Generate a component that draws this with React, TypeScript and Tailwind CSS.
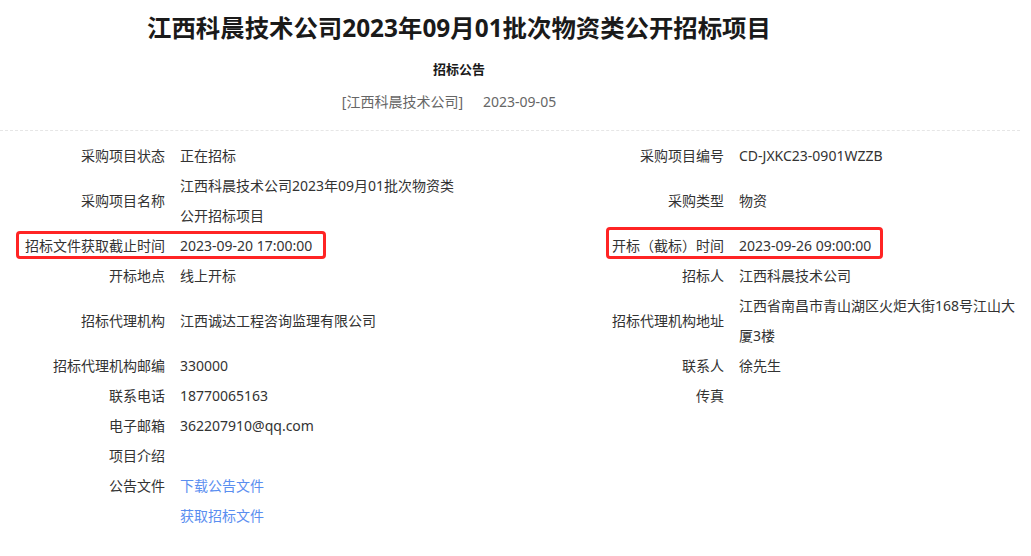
import React from "react";

type Row = {
  l1: string;
  v1?: React.ReactNode;
  l2?: string;
  v2?: React.ReactNode;
  box?: boolean;
};

const rows: Row[] = [
  { l1: "采购项目状态", v1: "正在招标", l2: "采购项目编号", v2: "CD-JXKC23-0901WZZB" },
  { l1: "采购项目名称", v1: "江西科晨技术公司2023年09月01批次物资类公开招标项目", l2: "采购类型", v2: "物资" },
  { l1: "招标文件获取截止时间", v1: "2023-09-20 17:00:00", l2: "开标（截标）时间", v2: "2023-09-26 09:00:00", box: true },
  { l1: "开标地点", v1: "线上开标", l2: "招标人", v2: "江西科晨技术公司" },
  { l1: "招标代理机构", v1: "江西诚达工程咨询监理有限公司", l2: "招标代理机构地址", v2: "江西省南昌市青山湖区火炬大街168号江山大厦3楼" },
  { l1: "招标代理机构邮编", v1: "330000", l2: "联系人", v2: "徐先生" },
  { l1: "联系电话", v1: "18770065163", l2: "传真", v2: "" },
  { l1: "电子邮箱", v1: "362207910@qq.com" },
  { l1: "项目介绍", v1: "" },
  { l1: "公告文件", v1: <span className="text-[#5a8ef0]">下载公告文件</span> },
  { l1: "", v1: <span className="text-[#5a8ef0]">获取招标文件</span> },
];

export default function App() {
  return (
    <div className="w-[1031px] h-[556px] bg-white text-[#333] font-['Noto_Sans','Noto_Sans_CJK_SC',sans-serif] overflow-hidden">
      <div className="w-[918px] flex flex-col items-center">
        <h1 className="pt-[10px] text-[24.4px] leading-[36px] font-bold text-[#1a1a1a]">
          江西科晨技术公司2023年09月01批次物资类公开招标项目
        </h1>
        <div className="mt-[13px] text-[13px] leading-[20px] font-bold text-[#1a1a1a]">招标公告</div>
        <div className="mt-[13px] flex gap-[20px] pr-[20px] text-[14px] leading-[20px] text-[#666]">
          <span>[江西科晨技术公司]</span>
          <span>2023-09-05</span>
        </div>
      </div>
      <div className="mt-[18px] w-[1020px] border-t border-dashed border-[#e6e6e6]" />
      <div className="mt-[10px] grid grid-cols-[165px_300px_259px_296px] items-center text-[14px] leading-[30px]">
        {rows.map((r, i) => (
          <React.Fragment key={i}>
            <div className="relative text-right">
              {r.box && (
                <div className="absolute left-[16px] top-0 w-[310px] h-[28px] border-[3px] border-[#ff2424] rounded-[4px]" />
              )}
              {r.l1}
            </div>
            <div className="pl-[15px]">{r.v1}</div>
            <div className="relative text-right">
              {r.box && (
                <div className="absolute left-[141px] top-[-4px] w-[277px] h-[32px] border-[3px] border-[#ff2424] rounded-[4px]" />
              )}
              {r.l2 ?? ""}
            </div>
            <div className="pl-[15px]">{r.v2 ?? ""}</div>
          </React.Fragment>
        ))}
      </div>
    </div>
  );
}
